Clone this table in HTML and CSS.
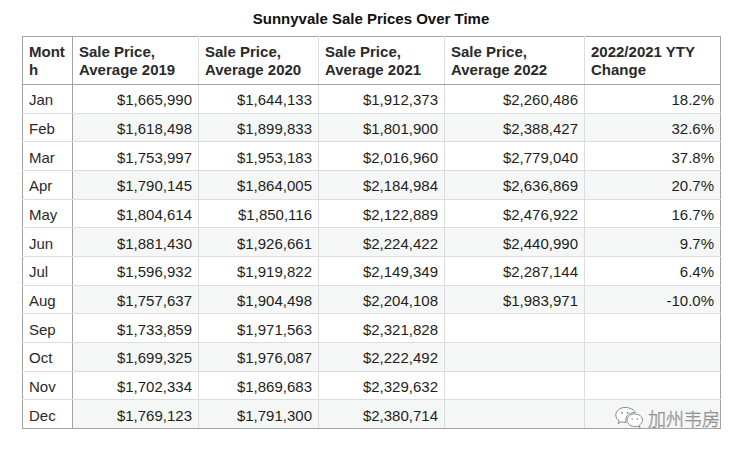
FILE: index.html
```html
<!DOCTYPE html>
<html lang="en">
<head>
<meta charset="utf-8">
<title>Sunnyvale Sale Prices Over Time</title>
<link rel="stylesheet" href="styles.css">
</head>
<body>
<div class="page">
  <h1 class="title">Sunnyvale Sale Prices Over Time</h1>
  <table class="prices">
    <colgroup>
      <col class="c-month">
      <col class="c-2019">
      <col class="c-2020">
      <col class="c-2021">
      <col class="c-2022">
      <col class="c-change">
    </colgroup>
    <thead>
      <tr>
        <th class="month">Month</th>
        <th>Sale Price, Average 2019</th>
        <th>Sale Price, Average 2020</th>
        <th>Sale Price, Average 2021</th>
        <th>Sale Price, Average 2022</th>
        <th>2022/2021 YTY Change</th>
      </tr>
    </thead>
    <tbody>
      <tr><td class="month">Jan</td><td>$1,665,990</td><td>$1,644,133</td><td>$1,912,373</td><td>$2,260,486</td><td>18.2%</td></tr>
      <tr><td class="month">Feb</td><td>$1,618,498</td><td>$1,899,833</td><td>$1,801,900</td><td>$2,388,427</td><td>32.6%</td></tr>
      <tr><td class="month">Mar</td><td>$1,753,997</td><td>$1,953,183</td><td>$2,016,960</td><td>$2,779,040</td><td>37.8%</td></tr>
      <tr><td class="month">Apr</td><td>$1,790,145</td><td>$1,864,005</td><td>$2,184,984</td><td>$2,636,869</td><td>20.7%</td></tr>
      <tr><td class="month">May</td><td>$1,804,614</td><td>$1,850,116</td><td>$2,122,889</td><td>$2,476,922</td><td>16.7%</td></tr>
      <tr><td class="month">Jun</td><td>$1,881,430</td><td>$1,926,661</td><td>$2,224,422</td><td>$2,440,990</td><td>9.7%</td></tr>
      <tr><td class="month">Jul</td><td>$1,596,932</td><td>$1,919,822</td><td>$2,149,349</td><td>$2,287,144</td><td>6.4%</td></tr>
      <tr><td class="month">Aug</td><td>$1,757,637</td><td>$1,904,498</td><td>$2,204,108</td><td>$1,983,971</td><td>-10.0%</td></tr>
      <tr><td class="month">Sep</td><td>$1,733,859</td><td>$1,971,563</td><td>$2,321,828</td><td></td><td></td></tr>
      <tr><td class="month">Oct</td><td>$1,699,325</td><td>$1,976,087</td><td>$2,222,492</td><td></td><td></td></tr>
      <tr><td class="month">Nov</td><td>$1,702,334</td><td>$1,869,683</td><td>$2,329,632</td><td></td><td></td></tr>
      <tr><td class="month">Dec</td><td>$1,769,123</td><td>$1,791,300</td><td>$2,380,714</td><td></td><td></td></tr>
    </tbody>
  </table>
  <div class="watermark">
    <svg class="wechat" width="30" height="26" viewBox="0 0 30 26">
      <path d="M11 2.5C5.8 2.5 1.8 5.9 1.8 10c0 2.4 1.3 4.4 3.3 5.8l-.9 2.7 3.2-1.7c1.1.3 2.3.5 3.6.5.4 0 .8 0 1.2-.1-.3-.8-.4-1.6-.4-2.4 0-4.2 4-7.4 8.9-7.4h.6C20.4 4.9 16.1 2.5 11 2.5z" fill="#fff" stroke="#7a7a7a" stroke-width="0.9"/>
      <path d="M28.5 15.2c0-3.5-3.5-6.3-7.7-6.3s-7.7 2.8-7.7 6.3 3.5 6.3 7.7 6.3c.9 0 1.8-.1 2.6-.4l2.6 1.4-.7-2.3c1.9-1.2 3.2-3 3.2-5z" fill="#fff" stroke="#7a7a7a" stroke-width="0.9"/>
      <circle cx="8" cy="7.8" r="0.9" fill="#7a7a7a"/>
      <circle cx="13.6" cy="7.8" r="0.9" fill="#7a7a7a"/>
      <circle cx="18.2" cy="14" r="0.75" fill="#7a7a7a"/>
      <circle cx="23.3" cy="14" r="0.75" fill="#7a7a7a"/>
    </svg>
    <span class="wm-text">加州韦房</span>
  </div>
</div>
</body>
</html>
```

FILE: styles.css
```css
html, body {
  margin: 0;
  padding: 0;
  background: #ffffff;
}

.page {
  position: relative;
  width: 743px;
  height: 456px;
  padding: 0 0 0 22px;
  box-sizing: border-box;
  font-family: "Liberation Sans", Arial, sans-serif;
  color: #1e1e1e;
}

.title {
  margin: 0;
  width: 698px;
  height: 36px;
  box-sizing: border-box;
  padding-top: 10px;
  text-align: center;
  font-size: 15px;
  line-height: 18px;
  font-weight: bold;
  color: #111;
}

.prices {
  border-collapse: collapse;
  table-layout: fixed;
  width: 698px;
  border: 1px solid #a3a3a3;
  font-size: 15px;
}

.c-month { width: 50px; }
.c-2019 { width: 126px; }
.c-2020 { width: 120px; }
.c-2021 { width: 126px; }
.c-2022 { width: 140px; }
.c-change { width: 136px; }

.prices th {
  height: 46px;
  padding: 1px 6px 0;
  text-align: left;
  vertical-align: middle;
  font-weight: bold;
  line-height: 18px;
  color: #2a2a2a;
  border-right: 1px solid #dddddd;
  border-bottom: 1px solid #a3a3a3;
}

.prices td {
  height: 24.67px;
  padding: 3px 6px 0;
  text-align: right;
  vertical-align: middle;
  line-height: 18px;
  border-right: 1px solid #dddddd;
  border-bottom: 1px solid #dddddd;
  white-space: nowrap;
}

.prices tr > :last-child {
  border-right-color: #a3a3a3;
}

.prices tbody tr:last-child td {
  border-bottom-color: #a3a3a3;
}

.prices .month {
  text-align: left;
  word-break: break-all;
  white-space: normal;
  color: #2a2a2a;
  border-right: 1px solid #a3a3a3;
  background: #ffffff;
}

.prices tbody tr:nth-child(even) td {
  background: #f4f7f6;
}

.prices tbody tr:nth-child(even) td.month {
  background: #ffffff;
}

.watermark {
  position: absolute;
  left: 614px;
  top: 405px;
  display: flex;
  align-items: center;
  gap: 4px;
}

.wechat {
  display: block;
}

.wm-text {
  font-family: "Noto Sans CJK SC", sans-serif;
  font-weight: 300;
  font-size: 18px;
  line-height: 26px;
  color: #ffffff;
  -webkit-text-stroke: 0.5px #777777;
}
```
